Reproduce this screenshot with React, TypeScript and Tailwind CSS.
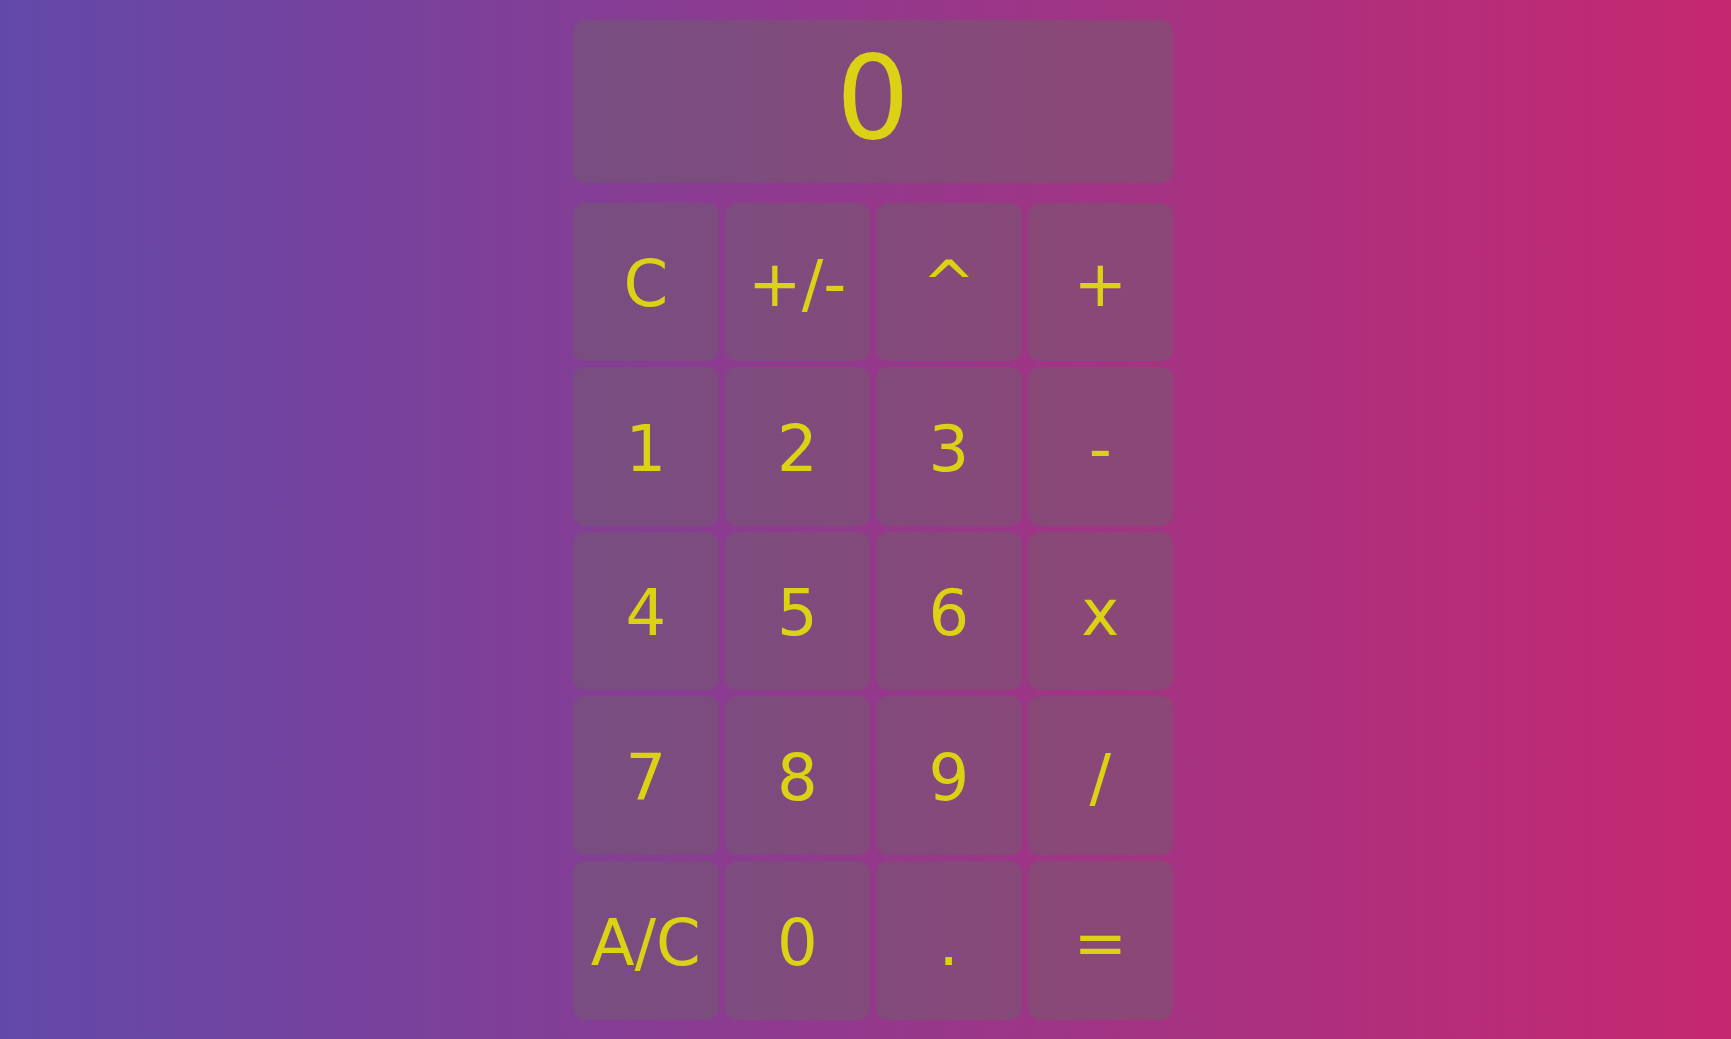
import React from "react";

const keys = [
  "C", "+/-", "^", "+",
  "1", "2", "3", "-",
  "4", "5", "6", "x",
  "7", "8", "9", "/",
  "A/C", "0", ".", "=",
];

export default function App() {
  return (
    <div className="h-screen w-full flex items-center justify-center pl-[15px] bg-[linear-gradient(to_right,#6249a9,#c62870)] font-['DejaVu_Sans',sans-serif] text-[#dcd215]">
      <div className="w-[600px] h-[1000px] flex flex-col gap-[20px]">
        <div className="h-[163px] rounded-[12px] bg-[rgba(108,99,102,0.44)] flex items-center justify-center text-[116px] leading-none pb-[6px]">
          0
        </div>
        <div className="flex-1 grid grid-cols-4 grid-rows-5 gap-[6px]">
          {keys.map((k) => (
            <button
              key={k}
              className="rounded-[12px] bg-[rgba(108,99,102,0.44)] flex items-center justify-center text-[64px] leading-none pt-[5px]"
            >
              {k}
            </button>
          ))}
        </div>
      </div>
    </div>
  );
}
